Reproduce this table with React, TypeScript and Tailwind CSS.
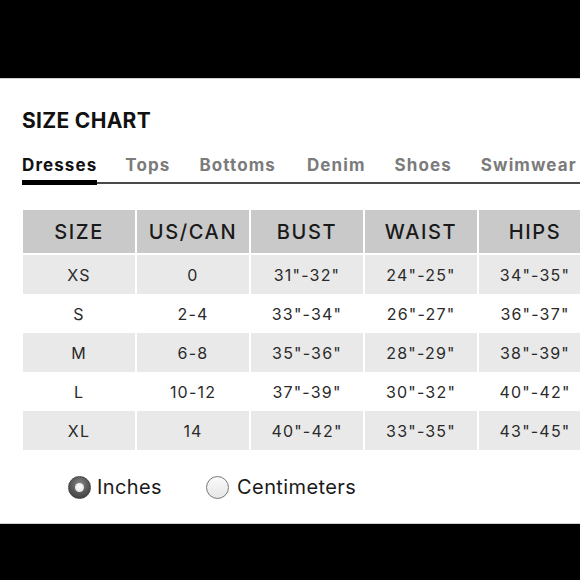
import React from "react";

const headers = ["SIZE", "US/CAN", "BUST", "WAIST", "HIPS"];
const rows = [
  ["XS", "0", '31"-32"', '24"-25"', '34"-35"'],
  ["S", "2-4", '33"-34"', '26"-27"', '36"-37"'],
  ["M", "6-8", '35"-36"', '28"-29"', '38"-39"'],
  ["L", "10-12", '37"-39"', '30"-32"', '40"-42"'],
  ["XL", "14", '40"-42"', '33"-35"', '43"-45"'],
];
const tabs: [string, string][] = [
  ["Dresses", ""],
  ["Tops", "ml-[28px]"],
  ["Bottoms", "ml-[29px]"],
  ["Denim", "ml-[31px]"],
  ["Shoes", "ml-[29px]"],
  ["Swimwear", "ml-[29px]"],
];

export default function App() {
  return (
    <div className="w-[580px] h-[580px] bg-black overflow-hidden" style={{ fontFamily: "Inter, 'Open Sans', sans-serif" }}>
      <div className="h-[78px] bg-black" />
      <div className="h-[446px] bg-white border-t border-[#cfcfcf] border-b relative">
        <div className="pl-[22px] pt-[30px] h-[60px] text-[21px] leading-[24px] font-bold text-[#111] tracking-[0.3px]">SIZE CHART</div>
        <div className="relative mt-[16px] h-[46px] mb-[9px]">
          <div className="flex pl-[22px] text-[17px] leading-[20px] font-bold tracking-[1.1px] whitespace-nowrap">
            {tabs.map(([t, m], i) => (
              <span key={t} className={`${m} ${i === 0 ? "text-[#111]" : "text-[#7b7b7b]"}`}>{t}</span>
            ))}
          </div>
          <div className="absolute left-[97px] right-0 top-[27px] h-[2px] bg-[#4a4a4a]" />
          <div className="absolute left-[22px] w-[75px] top-[25px] h-[5px] bg-black" />
        </div>
        <div className="ml-[23px] w-[700px]">
          <div className="flex gap-[2px] h-[43px] mb-[2px]">
            {headers.map((h) => (
              <div key={h} className="w-[112px] shrink-0 bg-[#c9c9c9] flex items-center justify-center text-[20px] font-medium tracking-[1.6px] text-[#1a1a1a]">
                {h}
              </div>
            ))}
          </div>
          {rows.map((r, ri) => (
            <div key={ri} className="flex gap-[2px] h-[39px]">
              {r.map((c, ci) => (
                <div key={ci} className={`w-[112px] shrink-0 flex items-center justify-center text-[16px] tracking-[1.2px] text-[#2a2a2a] ${ri % 2 === 0 ? "bg-[#e9e9e9]" : "bg-white"}`}>
                  {c}
                </div>
              ))}
            </div>
          ))}
        </div>
        <div className="flex items-center mt-[22px] ml-[68px] text-[20px] tracking-[0.4px] text-[#1a1a1a]">
          <div className="flex items-center gap-[6px]">
            <div className="w-[23px] h-[23px] rounded-full border border-[#444] flex items-center justify-center" style={{ background: "radial-gradient(circle at 50% 35%, #888 0%, #555 55%, #333 100%)" }}>
              <div className="w-[9px] h-[9px] rounded-full" style={{ background: "radial-gradient(circle at 50% 40%, #fff 0%, #ddd 100%)" }} />
            </div>
            <span>Inches</span>
          </div>
          <div className="flex items-center gap-[8px] ml-[44px]">
            <div className="w-[23px] h-[23px] rounded-full border border-[#777]" style={{ background: "linear-gradient(180deg, #fafafa 0%, #e6e6e6 100%)" }} />
            <span>Centimeters</span>
          </div>
        </div>
      </div>
    </div>
  );
}
